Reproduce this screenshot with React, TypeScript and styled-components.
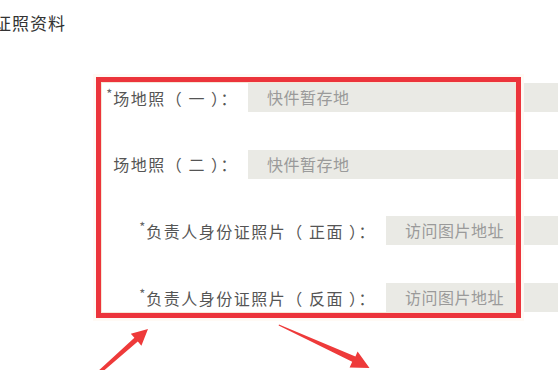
import styled, { createGlobalStyle } from 'styled-components';

const GlobalStyle = createGlobalStyle`
  html, body {
    margin: 0;
    padding: 0;
    background: #ffffff;
  }
  body {
    font-family: 'Noto Sans CJK SC', 'Noto Sans', sans-serif;
  }
`;

type FieldItem = {
  label: string;
  required: boolean;
  placeholder: string;
};

const siteFields: FieldItem[] = [
  { label: '场地照（ 一 ）：', required: true, placeholder: '快件暂存地' },
  { label: '场地照（ 二 ）：', required: false, placeholder: '快件暂存地' },
];

const idFields: FieldItem[] = [
  { label: '负责人身份证照片（ 正面 ）：', required: true, placeholder: '访问图片地址' },
  { label: '负责人身份证照片（ 反面 ）：', required: true, placeholder: '访问图片地址' },
];

function App() {
  const renderRow = (item: FieldItem, labelWidth: number) => (
    <Row key={item.label}>
      <Label width={labelWidth}>
        {item.required && <Star>*</Star>}
        {item.label}
      </Label>
      <Field>{item.placeholder}</Field>
    </Row>
  );

  return (
    <Page>
      <GlobalStyle />
      <Title>证照资料</Title>

      <Form>
        {siteFields.map((item) => renderRow(item, 238))}
        {idFields.map((item) => renderRow(item, 376))}
      </Form>

      <Highlight />

      <Arrows width='558' height='370' viewBox='0 0 558 370'>
        <polygon
          fill='#ee3a3a'
          points='148,329 141.4,345.7 137.8,341.6 101,373.1 98.6,370.6 134.4,337.8 130.8,333.7'
        />
        <polygon
          fill='#ee3a3a'
          points='279,324.6 355.4,356.4 357.6,351.4 369.5,368 349.6,367.6 352.2,361.8 278.6,325.6'
        />
      </Arrows>
    </Page>
  );
}

export default App;

const Page = styled.div`
  position: relative;
  width: 558px;
  height: 370px;
  overflow: hidden;
`;

const Title = styled.div`
  margin: 11px 0 0 -6px;
  height: 24px;
  line-height: 24px;
  font-size: 17px;
  letter-spacing: 1px;
  color: #333333;
`;

const Form = styled.div`
  display: flex;
  flex-direction: column;
  gap: 37.7px;
  margin-top: 48px;
`;

const Row = styled.div`
  display: flex;
  align-items: center;
  height: 29px;
`;

const Label = styled.div<{ width: number }>`
  flex: 0 0 ${({ width }) => width}px;
  text-align: right;
  font-size: 16px;
  letter-spacing: 1.5px;
  color: #555555;
  white-space: pre;
`;

const Star = styled.span`
  display: inline-block;
  font-size: 13px;
  vertical-align: top;
  line-height: 16px;
  margin-right: 1px;
  letter-spacing: 0;
  color: #666666;
`;

const Field = styled.div`
  flex: 1;
  height: 29px;
  line-height: 29px;
  margin-left: 10px;
  padding-left: 19px;
  background: #eaeae5;
  font-size: 16px;
  letter-spacing: 0.5px;
  color: #9a9a9a;
  white-space: nowrap;
`;

const Highlight = styled.div`
  position: absolute;
  left: 96px;
  top: 77px;
  width: 425px;
  height: 241px;
  box-sizing: border-box;
  border: 5px solid #ec343b;
  box-shadow: 0 0 0 3px rgba(255, 250, 244, 0.9), inset 0 0 0 1px #f6e6d6;
  pointer-events: none;
`;

const Arrows = styled.svg`
  position: absolute;
  left: 0;
  top: 0;
  pointer-events: none;
`;
